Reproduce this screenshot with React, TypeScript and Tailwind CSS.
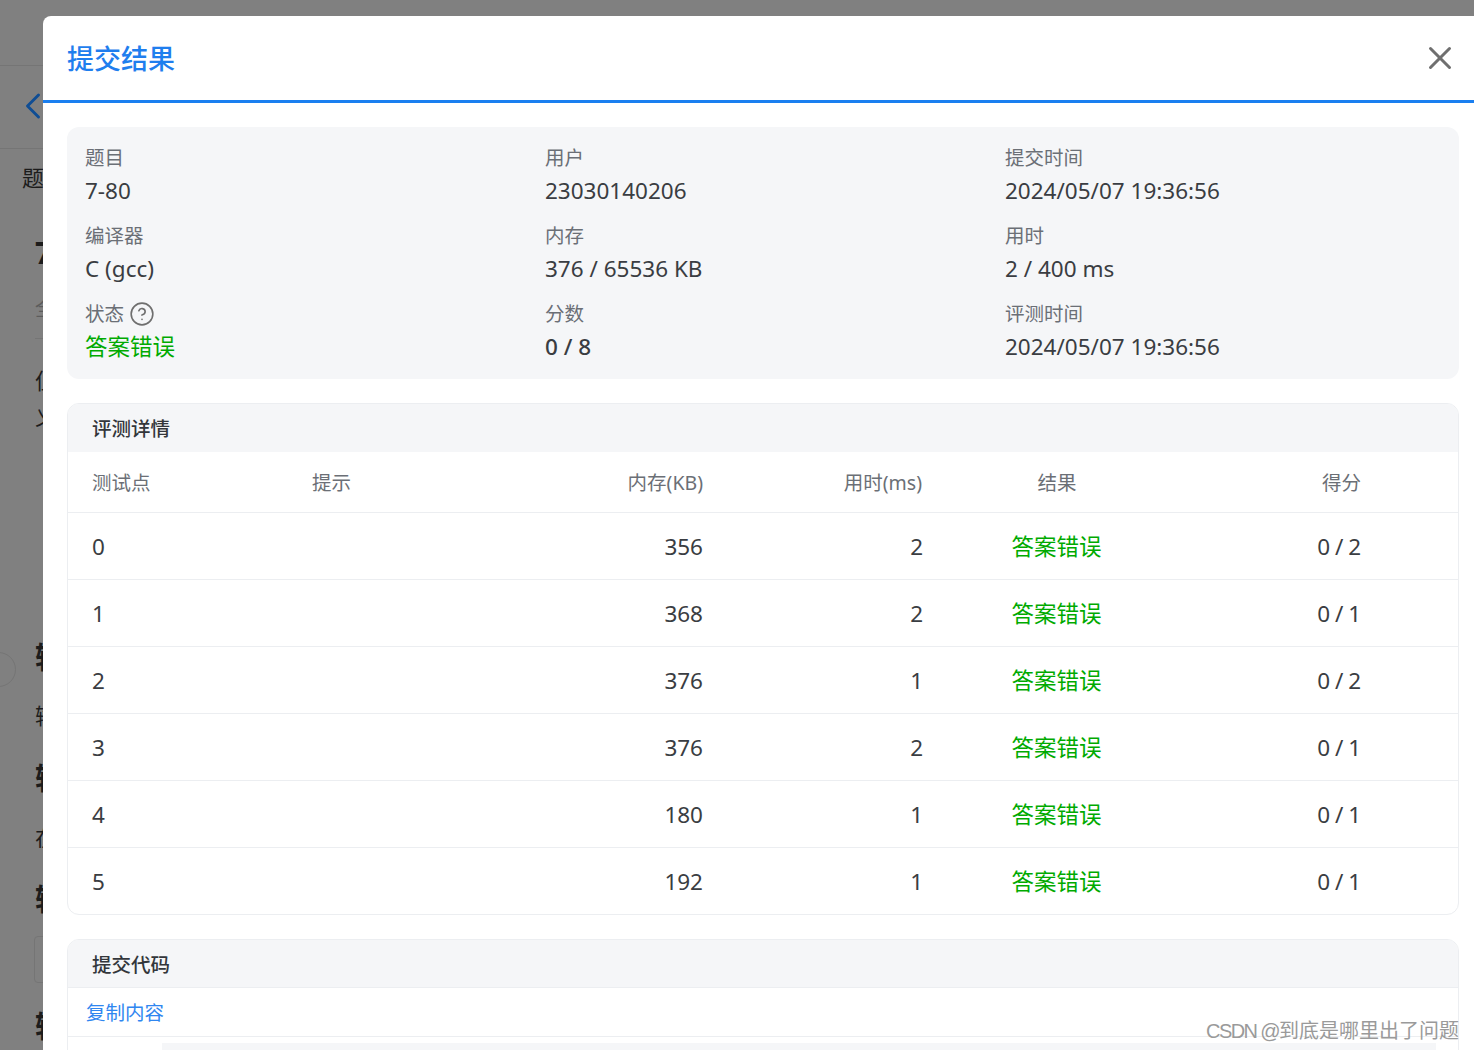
import React from "react";
import { X, ChevronLeft, CircleHelp } from "lucide-react";

const font = { fontFamily: '"Noto Sans", "Noto Sans CJK SC", sans-serif' };

const cases = [
  { id: 0, mem: 356, time: 2, score: "0 / 2" },
  { id: 1, mem: 368, time: 2, score: "0 / 1" },
  { id: 2, mem: 376, time: 1, score: "0 / 2" },
  { id: 3, mem: 376, time: 2, score: "0 / 1" },
  { id: 4, mem: 180, time: 1, score: "0 / 1" },
  { id: 5, mem: 192, time: 1, score: "0 / 1" },
];

const cols = "grid grid-cols-[220px_220px_219px_219px_220px_219px_1fr] items-center";

function Info({ label, children }: { label: React.ReactNode; children: React.ReactNode }) {
  return (
    <div>
      <div className="flex items-center gap-[5px] h-[33px] text-[19.5px] text-[#6b6f76]">{label}</div>
      <div className="h-[33px] leading-[33px] text-[22.5px] text-[#3a3d42]">{children}</div>
    </div>
  );
}

function Backdrop() {
  return (
    <div className="h-full w-[43px] text-[#1c1c1c] overflow-hidden">
      <div className="h-[66px] border-b border-[#757575] w-[43px]" />
      <div className="h-[83px] border-b border-[#757575] flex items-center pl-[11px]">
        <ChevronLeft className="w-11 h-11 shrink-0 text-[#0f4d94] mb-[3px]" strokeWidth={1.6} />
      </div>
      <div className="whitespace-nowrap pl-[22px] pt-[14px] text-[22px] leading-7">题目</div>
      <div className="whitespace-nowrap pl-[35px] pt-[44px] text-[30px] leading-9 font-bold">7-80</div>
      <div className="whitespace-nowrap pl-[35px] pt-[24px] text-[20px] leading-7 text-[#5c5c5c]">全部</div>
      <div className="ml-[35px] mt-[15px] border-t border-[#757575] w-[60px]" />
      <div className="whitespace-nowrap pl-[35px] pt-[25px] text-[22px] leading-8">但是</div>
      <div className="whitespace-nowrap pl-[35px] pt-[4px] text-[22px] leading-8">义</div>
      <div className="whitespace-nowrap pl-[35px] pt-[207px] text-[30px] leading-9 font-bold">输入</div>
      <div className="whitespace-nowrap pl-[35px] pt-[24px] text-[22px] leading-8">输入</div>
      <div className="whitespace-nowrap pl-[35px] pt-[29px] text-[30px] leading-9 font-bold">输出</div>
      <div className="whitespace-nowrap pl-[35px] pt-[25px] text-[22px] leading-8">在一</div>
      <div className="whitespace-nowrap pl-[35px] pt-[28px] text-[30px] leading-9 font-bold">输入</div>
      <div className="ml-[34px] mt-[19px] h-[47px] w-[60px] rounded border border-[#757575]" />
      <div className="whitespace-nowrap pl-[35px] pt-[25px] text-[30px] leading-9 font-bold">输出</div>
    </div>
  );
}

export default function App() {
  return (
    <div style={font} className="relative h-[1050px] w-[1474px] overflow-hidden bg-[#808080]">
      <Backdrop />
      <div className="absolute left-[-34px] top-[652px] w-[50px] h-[35px] rounded-full border border-[#757575] flex items-center justify-center text-[#5c5c5c]">
        <X className="w-6 h-6" strokeWidth={1.6} />
      </div>

      {/* Drawer */}
      <div className="absolute left-[43px] top-[16px] w-[1431px] h-[1034px] bg-white rounded-tl-lg overflow-hidden">
        <div className="h-[87px] border-b-[3px] border-[#1a7ff0] flex items-center justify-between pl-[24px] pr-[15px]">
          <h1 className="text-[27px] leading-9 font-medium text-[#1f7eee] mt-[1px]">提交结果</h1>
          <X className="w-[38px] h-[38px] text-[#6f6f6f]" strokeWidth={1.9} />
        </div>

        <div className="pl-6 pr-[15px] pt-6">
          {/* Summary */}
          <div className="rounded-xl bg-[#f5f6f8] pl-[18px] pt-[14px] pb-[16px] grid grid-cols-[460px_460px_1fr] gap-y-3">
            <Info label="题目">7-80</Info>
            <Info label="用户">23030140206</Info>
            <Info label="提交时间">2024/05/07 19:36:56</Info>
            <Info label="编译器">C (gcc)</Info>
            <Info label="内存">376 / 65536 KB</Info>
            <Info label="用时">2 / 400 ms</Info>
            <Info
              label={
                <>
                  状态
                  <CircleHelp className="w-[26px] h-[26px] text-[#6f6f6f]" strokeWidth={1.5} />
                </>
              }
            >
              <span className="text-[#00aa00]">答案错误</span>
            </Info>
            <Info label="分数">
              <span className="font-medium">0 / 8</span>
            </Info>
            <Info label="评测时间">2024/05/07 19:36:56</Info>
          </div>

          {/* Judge details */}
          <div className="mt-6 rounded-xl border border-[#eceef1] overflow-hidden">
            <div className="h-[48px] bg-[#f5f6f8] pl-6 pt-[2px] flex items-center text-[19.5px] font-medium text-[#33363b]">
              评测详情
            </div>
            <div className={`${cols} h-[61px] pt-[2px] border-b border-[#eceef1] text-[19.5px] text-[#6b6f76]`}>
              <div className="pl-6">测试点</div>
              <div className="pl-6">提示</div>
              <div className="text-right pr-6">内存(KB)</div>
              <div className="text-right pr-6">用时(ms)</div>
              <div className="text-center pl-[2px]">结果</div>
              <div className="text-right pr-6">得分</div>
            </div>
            {cases.map((c, i) => (
              <div
                key={c.id}
                className={`${cols} pt-[2px] text-[22.5px] text-[#3a3d42] ${i < cases.length - 1 ? "h-[67px] border-b border-[#eceef1]" : "h-[66px]"}`}
              >
                <div className="pl-6">{c.id}</div>
                <div />
                <div className="text-right pr-6">{c.mem}</div>
                <div className="text-right pr-[23px]">{c.time}</div>
                <div className="text-center pl-[1px] text-[#00aa00]">答案错误</div>
                <div className="text-right pr-6 [word-spacing:-1px]">{c.score}</div>
              </div>
            ))}
          </div>

          {/* Submitted code */}
          <div className="mt-6 rounded-t-xl border border-[#eceef1] overflow-hidden">
            <div className="h-[48px] bg-[#f5f6f8] pl-6 pt-[2px] flex items-center border-b border-[#eceef1] text-[19.5px] font-medium text-[#33363b]">
              提交代码
            </div>
            <div className="h-[49px] pl-[18px] pt-[1px] flex items-center border-b border-[#eceef1] text-[19.5px] text-[#2f86f0]">
              复制内容
            </div>
            <div className="h-[40px] pt-[6px] pl-[94px] pr-[22px]">
              <div className="h-full bg-[#f5f6f8]" />
            </div>
          </div>
        </div>
      </div>

      {/* Watermark */}
      <div
        style={{ fontFamily: '"Liberation Sans", "Noto Sans CJK SC", sans-serif' }}
        className="absolute right-[15px] top-[1017px] text-[20px] leading-7 text-[#9a9a9a] whitespace-nowrap"
      >
        <span className="tracking-[-1.6px]">CSDN @</span>到底是哪里出了问题
      </div>
    </div>
  );
}
